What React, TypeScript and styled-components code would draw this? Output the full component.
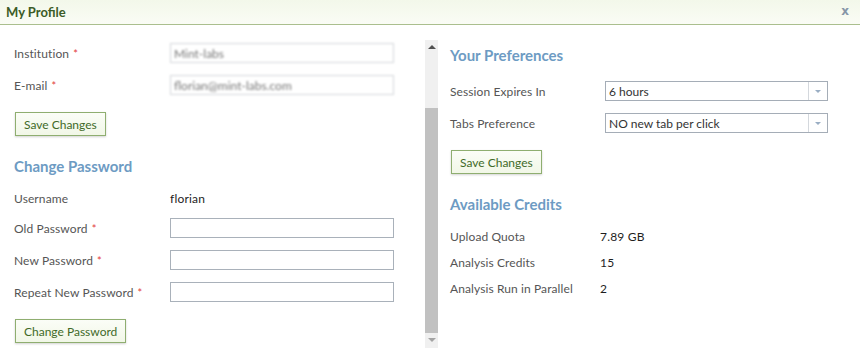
import React from "react";
import styled, { createGlobalStyle } from "styled-components";

const Global = createGlobalStyle`
  html, body { margin: 0; padding: 0; background: #fff; }
  body { font-family: Lato, "Open Sans", sans-serif; }
`;

const Window = styled.div`
  width: 860px;
  height: 360px;
  background: #fff;
  display: flex;
  flex-direction: column;
  overflow: hidden;
`;

const Header = styled.div`
  height: 24px;
  flex: none;
  display: flex;
  align-items: center;
  justify-content: space-between;
  padding: 0 11px 0 6px;
  background: linear-gradient(#f3f8ea, #fafcf5);
  border-bottom: 1px solid #aabf8e;
`;

const Title = styled.div`
  font-size: 13px;
  font-weight: 700;
  color: #3c5c27;
`;

const Close = styled.div`
  font-family: "DejaVu Sans", sans-serif;
  font-size: 12px;
  font-weight: 700;
  color: #8796a8;
  margin-top: -2px;
`;

const Body = styled.div`
  flex: 1;
  display: flex;
`;

const LeftPanel = styled.div`
  width: 411px;
  padding: 18px 0 0 14px;
  display: flex;
  flex-direction: column;
`;

const RightPanel = styled.div`
  flex: 1;
  padding: 21px 0 0 12px;
  display: flex;
  flex-direction: column;
`;

const Scrollbar = styled.div`
  width: 13px;
  margin: 15px 0 12px;
  background: #f0f0f0;
  display: flex;
  flex-direction: column;
  align-items: center;
`;

const Arrow = styled.div<{ $down?: boolean }>`
  width: 0;
  height: 0;
  border-left: 4px solid transparent;
  border-right: 4px solid transparent;
  ${(p) =>
    p.$down
      ? "border-top: 4px solid #a3a3a3; margin: 5px 0 6px;"
      : "border-bottom: 4px solid #505050; margin: 5px 0 0;"}
`;

const Track = styled.div`
  flex: 1;
  width: 100%;
  display: flex;
  flex-direction: column;
  justify-content: flex-end;
`;

const Thumb = styled.div`
  width: 100%;
  height: 225px;
  background: #c1c1c1;
`;

const Row = styled.div<{ $gap?: number }>`
  display: flex;
  align-items: center;
  height: 20px;
  margin-bottom: ${(p) => p.$gap ?? 12}px;
`;

const Label = styled.div<{ $w?: number }>`
  width: ${(p) => p.$w ?? 156}px;
  flex: none;
  font-size: 12px;
  color: #555;
  letter-spacing: 0.1px;
`;

const Req = styled.span`
  color: #e23b3b;
  margin-left: 4px;
  font-size: 11px;
`;

const Value = styled.div`
  font-size: 12px;
  color: #1e1e1e;
  font-weight: 400;
  letter-spacing: 0.2px;
`;

const TextBox = styled.div<{ $blur?: boolean }>`
  width: 219px;
  height: 18px;
  border: 1px solid ${(p) => (p.$blur ? "#d3d6da" : "#a9b1ba")};
  background: #fff;
  display: flex;
  align-items: center;
  padding-left: 3px;
  font-size: 12px;
  color: #777;
  ${(p) => (p.$blur ? "filter: blur(1.3px);" : "")}
`;

const Select = styled.div`
  width: 221px;
  height: 18px;
  border: 1px solid #a5adb7;
  background: #fff;
  display: flex;
  align-items: stretch;
`;

const SelectText = styled.div`
  flex: 1;
  font-size: 12px;
  color: #333;
  padding-left: 3px;
  display: flex;
  align-items: center;
`;

const SelectBtn = styled.div`
  width: 18px;
  border-left: 1px solid #d4d8dd;
  display: flex;
  align-items: center;
  justify-content: center;
  &::after {
    content: "";
    border-left: 3px solid transparent;
    border-right: 3px solid transparent;
    border-top: 3px solid #9aaec4;
  }
`;

const Button = styled.button<{ $mt?: number }>`
  align-self: flex-start;
  margin: ${(p) => p.$mt ?? 0}px 0 0 1px;
  height: 24px;
  padding: 0 8px;
  border: 1px solid #8fae70;
  background: linear-gradient(#fbfdf7, #f1f7e7);
  box-shadow: 0 1px 2px rgba(0, 0, 0, 0.18);
  color: #3f6a28;
  font-family: Lato, "Open Sans", sans-serif;
  font-size: 12px;
  cursor: pointer;
`;

const Heading = styled.div<{ $mt?: number; $mb?: number }>`
  font-size: 15px;
  font-weight: 700;
  color: #6d9bc3;
  margin: ${(p) => p.$mt ?? 0}px 0 ${(p) => p.$mb ?? 0}px;
  height: 18px;
  line-height: 18px;
`;

const Field = ({
  label,
  req = true,
  gap,
  children,
}: {
  label: string;
  req?: boolean;
  gap?: number;
  children: React.ReactNode;
}) => (
  <Row $gap={gap}>
    <Label>
      {label}
      {req && <Req>*</Req>}
    </Label>
    {children}
  </Row>
);

export default function App() {
  return (
    <>
      <Global />
      <Window>
        <Header>
          <Title>My Profile</Title>
          <Close>x</Close>
        </Header>
        <Body>
          <LeftPanel>
            <Field label="Institution">
              <TextBox $blur>Mint-labs</TextBox>
            </Field>
            <Field label="E-mail" gap={0}>
              <TextBox $blur>florian@mint-labs.com</TextBox>
            </Field>
            <Button $mt={17}>Save Changes</Button>
            <Heading $mt={21} $mb={13}>Change Password</Heading>
            <Row $gap={10}>
              <Label>Username</Label>
              <Value>florian</Value>
            </Row>
            <Field label="Old Password">
              <TextBox />
            </Field>
            <Field label="New Password">
              <TextBox />
            </Field>
            <Field label="Repeat New Password" gap={0}>
              <TextBox />
            </Field>
            <Button $mt={17}>Change Password</Button>
          </LeftPanel>
          <Scrollbar>
            <Arrow />
            <Track>
              <Thumb />
            </Track>
            <Arrow $down />
          </Scrollbar>
          <RightPanel>
            <Heading $mb={17}>Your Preferences</Heading>
            <Row>
              <Label $w={155}>Session Expires In</Label>
              <Select>
                <SelectText>6 hours</SelectText>
                <SelectBtn />
              </Select>
            </Row>
            <Row $gap={0}>
              <Label $w={155}>Tabs Preference</Label>
              <Select>
                <SelectText>NO new tab per click</SelectText>
                <SelectBtn />
              </Select>
            </Row>
            <Button $mt={17}>Save Changes</Button>
            <Heading $mt={21} $mb={13}>Available Credits</Heading>
            <Row $gap={6}>
              <Label $w={150}>Upload Quota</Label>
              <Value>7.89 GB</Value>
            </Row>
            <Row $gap={6}>
              <Label $w={150}>Analysis Credits</Label>
              <Value>15</Value>
            </Row>
            <Row $gap={6}>
              <Label $w={150}>Analysis Run in Parallel</Label>
              <Value>2</Value>
            </Row>
          </RightPanel>
        </Body>
      </Window>
    </>
  );
}
